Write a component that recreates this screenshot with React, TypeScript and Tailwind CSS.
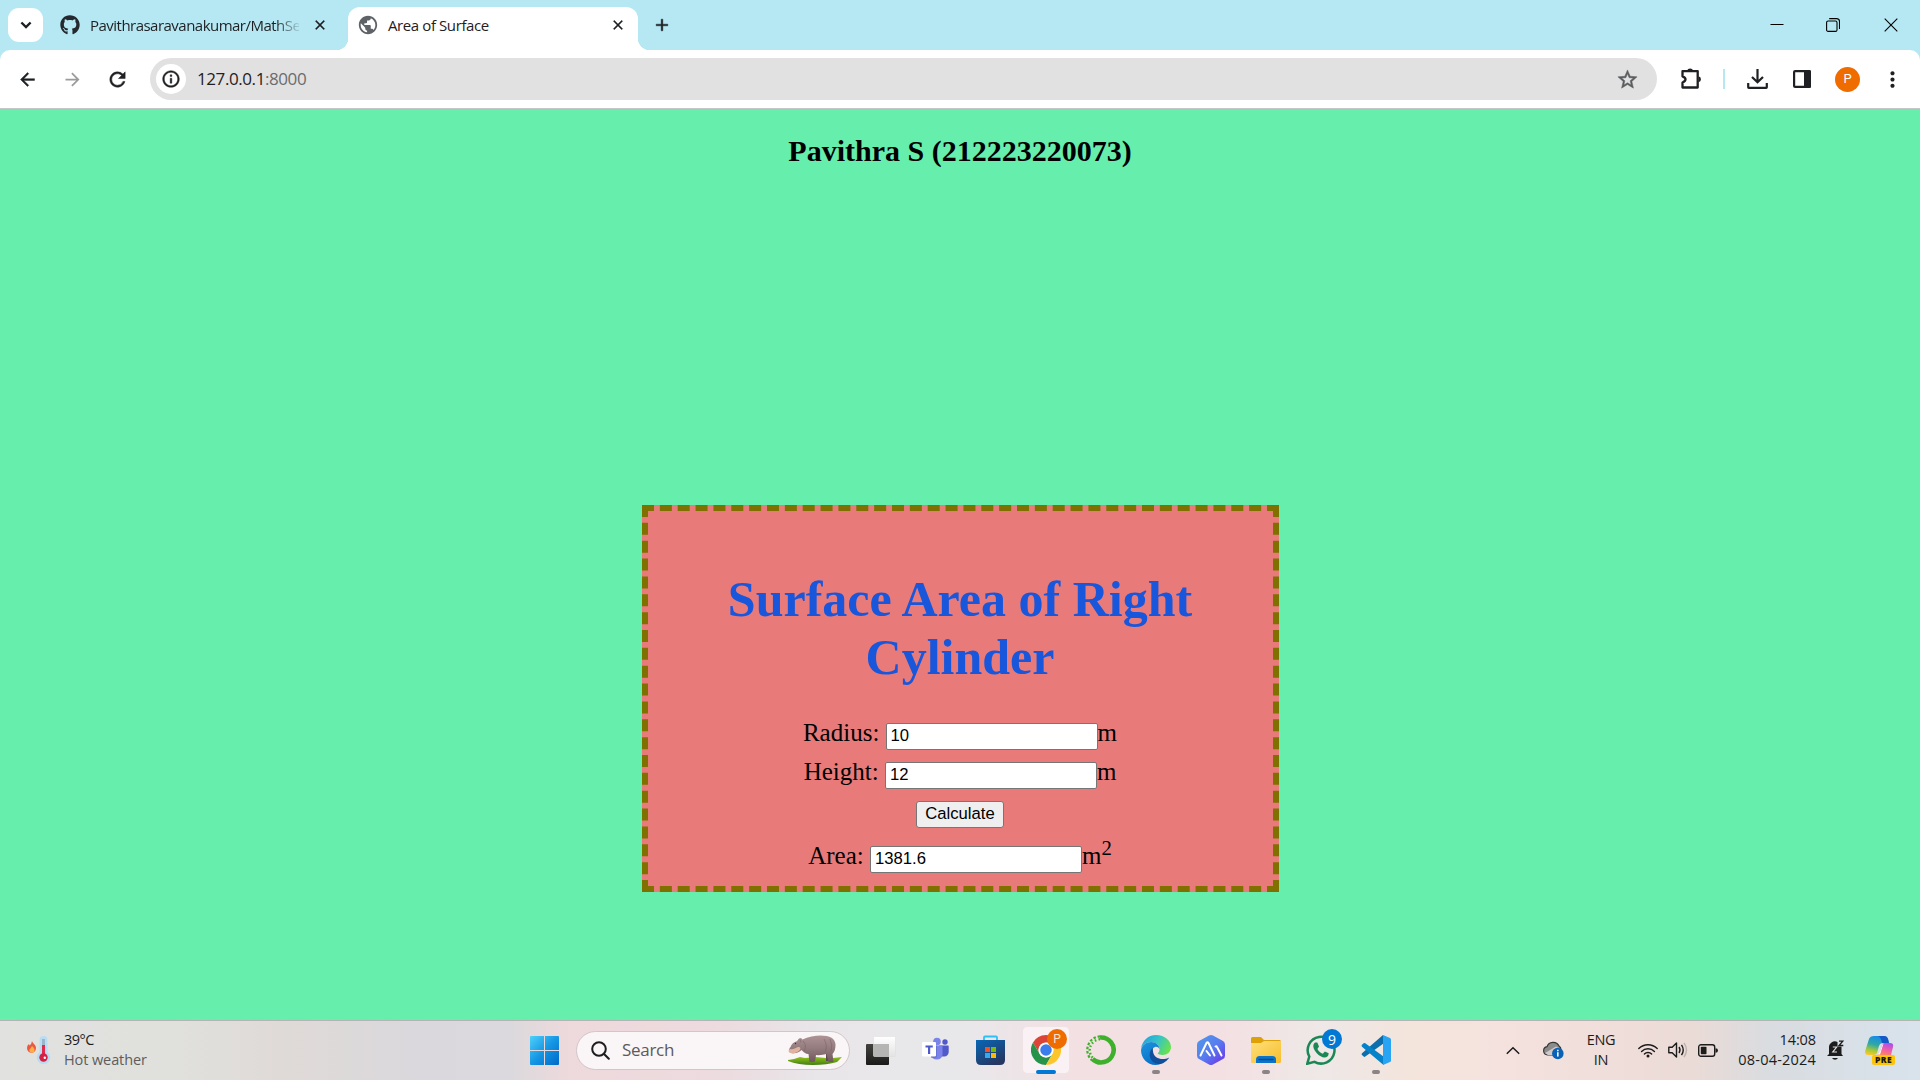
import React, { type ReactNode } from "react";
import { MdArrowBack, MdArrowForward, MdRefresh, MdOutlineInfo, MdStarBorder, MdClose, MdAdd, MdPublic, MdMoreVert } from "react-icons/md";
import { FaGithub } from "react-icons/fa";

const UI = "font-['Open_Sans','Noto_Sans',sans-serif]";
const SERIF = "font-['Liberation_Serif','Times_New_Roman',serif]";
const SANS = "font-['Liberation_Sans',Arial,sans-serif]";
/* Thickens a Material glyph without outlining its transparent bounding path. */
const BOLD = "stroke-current stroke-[0.5] [&_path[fill=none]]:stroke-none";

function TabStrip() {
  return (
    <div className="flex h-[50px] bg-[#b5e8f3] text-[#1f2023]">
      <button className="mt-2 ml-2 flex h-[34px] w-[35px] items-center justify-center rounded-[11px] bg-white">
        <svg viewBox="0 0 12 8" className="h-2 w-3" fill="none" stroke="currentColor" strokeWidth="2.4">
          <path d="M1.4 1.5 6 6l4.600-4.500" />
        </svg>
      </button>
      <div className="ml-[17px] flex w-[288px] items-center">
        <FaGithub className="h-5 w-5 shrink-0 text-[#24292f]" />
        <div className="ml-[10px] w-[209px] text-[15px] tracking-[-0.520px] whitespace-nowrap [mask-image:linear-gradient(to_right,black_185px,transparent_212px)]">
          Pavithrasaravanakumar/MathSe
        </div>
        <MdClose className={`ml-[13px] h-[16px] w-[16px] shrink-0 ${BOLD}`} />
      </div>
      <div className="relative mt-[7px] flex h-[43px] w-[290px] items-center rounded-t-[12px] bg-white pb-[7px] before:absolute before:bottom-0 before:-left-3 before:h-3 before:w-3 before:bg-[radial-gradient(circle_at_0_0,#b5e8f3_12px,white_12.500px)] after:absolute after:-right-3 after:bottom-0 after:h-3 after:w-3 after:bg-[radial-gradient(circle_at_100%_0,#b5e8f3_12px,white_12.500px)]">
        <MdPublic className="ml-[9px] h-[22px] w-[22px] text-[#5f6368]" />
        <span className="ml-[9px] text-[15px] tracking-[-0.4px]">Area of Surface</span>
        <MdClose className={`mr-[12px] ml-auto h-[16px] w-[16px] ${BOLD}`} />
      </div>
      <MdAdd className={`mt-[15px] ml-[14px] h-5 w-5 ${BOLD}`} />
      <div className="ml-auto flex h-[49px] items-center text-black">
        <svg className="h-[14px] w-[14px]" viewBox="0 0 14 14" stroke="currentColor">
          <path d="M0.500 6.500h13" />
        </svg>
        <svg className="ml-[42px] h-[14px] w-[14px]" viewBox="0 0 14 14" fill="none" stroke="currentColor" strokeWidth="1.100">
          <rect x="0.600" y="3" width="10.400" height="10.400" rx="1.500" />
          <path d="M3.200.6h7.300a3 3 0 0 1 3 3v7.300" />
        </svg>
        <svg className="mr-[22px] ml-[44px] h-[14px] w-[14px]" viewBox="0 0 14 14" stroke="currentColor" strokeWidth="1.100">
          <path d="m.7.7 12.600 12.600M13.300.7.7 13.300" />
        </svg>
      </div>
    </div>
  );
}

function Toolbar() {
  return (
    <div className="bg-[#b5e8f3]">
      <div className="flex h-[59px] items-center rounded-t-[10px] border-b border-[#c5c5c5] bg-white text-[#1f2023]">
        <MdArrowBack className={`ml-[17px] h-[21px] w-[21px] ${BOLD}`} />
        <MdArrowForward className="ml-[24px] h-[21px] w-[21px] text-[#9b9b9b]" />
        <MdRefresh className={`ml-[23px] h-[23px] w-[23px] ${BOLD}`} />
        <div className="ml-[21px] flex h-[42px] w-[1507px] items-center rounded-full bg-[#e1e1e1]">
          <span className="ml-[6px] flex h-[30px] w-[30px] items-center justify-center rounded-full bg-white">
            <MdOutlineInfo className={`h-5 w-5 ${BOLD}`} />
          </span>
          <span className="ml-[11px] text-[17px] tracking-[-0.420px] text-[#1f2023]">
            127.0.0.1<span className="text-[#6a6c6e]">:8000</span>
          </span>
          <MdStarBorder className={`mr-[18px] ml-auto h-[23px] w-[23px] text-[#5b5c5e] ${BOLD}`} />
        </div>
        <svg className="ml-[23px] h-[22px] w-[23px]" viewBox="0 0 23 22" fill="none" stroke="currentColor" strokeWidth="2.300" strokeLinejoin="round">
          <path d="M2.500 3.200h15.200v16.300H2.500v-5c4-1.600 4-4.700 0-6.200z" />
          <path d="M7 3a3.200 3.200 0 0 1 6.200 0zM18.500 8.300a3 3 0 0 1 0 5.900z" fill="currentColor" stroke="none" />
        </svg>
        <span className="ml-[20px] h-5 w-[2px] bg-[#b5e8f3]" />
        <svg className="ml-[22px] h-5 w-[21px]" viewBox="0 0 21 20" fill="none" stroke="currentColor" strokeWidth="2.200">
          <path d="M10.500 0v13M5 8l5.500 5.300L16 8M1.200 14v4.300q0 .6.6.6h17.400q.6 0 .6-.6V14" />
        </svg>
        <svg className="ml-[25px] h-[18px] w-[18px]" viewBox="0 0 18 18">
          <rect x="1.100" y="1.100" width="15.800" height="15.800" rx="1" fill="none" stroke="currentColor" strokeWidth="2.200" />
          <path d="M11 0h5.500Q18 0 18 1.500v15q0 1.500-1.500 1.500H11z" fill="currentColor" />
        </svg>
        <span className="ml-[24px] flex h-[25px] w-[25px] items-center justify-center rounded-full bg-[#ef6c00] font-[Roboto,sans-serif] text-[13px] text-white">P</span>
        <MdMoreVert className="ml-[20px] h-[25px] w-[25px]" />
      </div>
    </div>
  );
}

function Field({ value }: { value: string }) {
  return (
    <input
      readOnly
      defaultValue={value}
      className={`h-[27px] w-[212px] rounded-[2px] border border-[#767676] bg-white px-1 py-0 align-baseline text-[16.667px] leading-[21px] text-black outline-none ${SANS}`}
    />
  );
}

function PageBody() {
  return (
    <main className={`h-[911px] overflow-hidden bg-[#66eead] text-black ${SERIF}`}>
      <h2 className="mt-[25px] text-center text-[30px] leading-[34px] font-bold">Pavithra S (212223220073)</h2>
      <section className="mt-[337px] ml-[642px] h-[387px] w-[637px] border-6 border-dashed border-[#807000] bg-[#e97a7a] pr-[1px] text-center text-[25px]">
        <h1 className="mx-auto mt-[59px] w-[500px] text-[50px] leading-[58px] font-bold text-[#1857dc]">Surface Area of Right Cylinder</h1>
        <div className="mt-[27px] h-[39px] leading-[39px]">Radius: <Field value="10" />m</div>
        <div className="h-[39px] leading-[39px]">Height: <Field value="12" />m</div>
        <div className="mt-1 flex h-[39px] items-center justify-center">
          <button className={`h-[27px] w-[88px] rounded-[3px] border border-[#767676] bg-[#efefef] pb-[2px] text-[16.667px] leading-[20px] ${SANS}`}>Calculate</button>
        </div>
        <div className="mt-[2px] h-[39px] leading-[39px]">
          Area: <Field value="1381.6" />m<sup className="-top-[9px] text-[20.800px] leading-none">2</sup>
        </div>
      </section>
    </main>
  );
}

function Slot({ children, running }: { children: ReactNode; running?: boolean }) {
  return (
    <div className="relative flex h-[48px] w-[55px] items-center justify-center">
      {children}
      {running && <span className="absolute bottom-0 left-[24px] h-1 w-2 rounded-full bg-[#8a8486]" />}
    </div>
  );
}

const Windows = () => (
  <svg className="h-[29px] w-[29px]" viewBox="0 0 29 29">
    <defs>
      <linearGradient id="win" x1="0" y1="0" x2="1" y2="1"><stop stopColor="#4fd0fb" /><stop offset=".5" stopColor="#1596e4" /><stop offset="1" stopColor="#0069c8" /></linearGradient>
    </defs>
    <path fill="url(#win)" d="M1 0h13v14H0V1q0-1 1-1zM15 0h13q1 0 1 1v13H15zM0 15h14v14H1q-1 0-1-1zM15 15h14v13q0 1-1 1H15z" />
  </svg>
);

const Hippo = () => (
  <svg className="h-[30px] w-[56px]" viewBox="0 0 56 30">
    <defs>
      <linearGradient id="hip" x1="0" y1="0" x2="0" y2="1"><stop stopColor="#ad9394" /><stop offset=".5" stopColor="#937a7d" /><stop offset="1" stopColor="#70585d" /></linearGradient>
      <linearGradient id="grass" x1="0" y1="0" x2="0" y2="1"><stop stopColor="#9ccb1c" /><stop offset="1" stopColor="#437d13" /></linearGradient>
    </defs>
    <path fill="url(#grass)" d="m1 25 6-1 6-2 5 1 11-1 10 1 4-2 3 2 9-1-5 5q-10 3-24 3-15 0-25-4z" />
    <path fill="#5f484d" d="M24 18h5l-1 8h-4zM39 17h5l-1 9h-4z" />
    <path fill="url(#hip)" d="M10 6 12 3.500l2-.500 1.500 1.500q4-2 9-3 8-1.500 15-.5c6 .7 9 5 9 9s-1 7-3 9l1 8h-5l-2-8q-5 1.500-11 1l-1 7h-5l-1-8c-3 0-5-2-7-4-2 2-6 4-10 3-3-1-3-4-1-6 1-3 3-5 7-6z" />
    <path fill="#e0b3a0" d="M3 14c3 1 5-1 8-2 3 0 3 2 1 4-3 2-6 3-9 2-2-1-2-3 0-4z" />
    <circle cx="8.500" cy="8.500" r=".7" fill="#402e30" />
    <path d="m13 4.500 1 3M16 6c3 3 3 7 1 10M37 4q4 7 1 13M43 4q3 6 1 12" fill="none" stroke="#755d60" strokeWidth=".5" />
  </svg>
);

const TaskView = () => (
  <svg className="h-[29px] w-[30px]" viewBox="0 0 30 29">
    <defs>
      <linearGradient id="tv" x1="0" y1="0" x2="0" y2="1"><stop stopColor="#42423f" /><stop offset="1" stopColor="#1b1b19" /></linearGradient>
      <linearGradient id="tw" x1="0" y1="0" x2="0" y2="1"><stop stopColor="#fff" /><stop offset="1" stopColor="#e3e3e3" /></linearGradient>
    </defs>
    <rect y="8" width="23" height="21" rx="1" fill="url(#tv)" />
    <rect x="7.500" y=".5" width="22" height="20" rx="1" fill="url(#tw)" stroke="#ddd" strokeWidth=".5" />
    <path d="M7.500 8H23v12.500H8.500q-1 0-1-1z" fill="#b5b5b3" />
  </svg>
);

const Teams = () => (
  <svg className="h-[26px] w-[27px]" viewBox="0 0 27 26">
    <circle cx="15" cy="4.500" r="3.800" fill="#7b83eb" /><circle cx="23" cy="5" r="2.700" fill="#5059c9" />
    <path d="M17 8.500h9q.7 0 .7.700v6a5 5 0 0 1-9.700 1z" fill="#5059c9" />
    <path d="M9 8.500h11.500v9a5.800 5.800 0 0 1-11.500 0z" fill="#7b83eb" />
    <path d="M9 8.500h5.500v12H9z" fill="#5562b8" />
    <rect y="5" width="14" height="14.500" rx="1" fill="#fff" />
    <path d="M3.500 8.500h7.300v2H8.200v6.500H6v-6.500H3.500z" fill="#5059c9" />
  </svg>
);

const Store = () => (
  <svg className="h-[30px] w-[29px]" viewBox="0 0 29 30">
    <defs><linearGradient id="store" x1="0" y1="0" x2=".6" y2="1"><stop stopColor="#0867b7" /><stop offset="1" stopColor="#253762" /></linearGradient></defs>
    <path d="M8 7V2.500q0-1 1-1h11q1 0 1 1V7" fill="none" stroke="#2cc0f5" strokeWidth="1.800" />
    <path d="M0 5h29v20q0 5-5 5H5q-5 0-5-5z" fill="url(#store)" />
    <path fill="#f25022" d="M9 12h5v5H9z" /><path fill="#7fba00" d="M15 12h5v5h-5z" />
    <path fill="#36a9ee" d="M9 18h5v5H9z" /><path fill="#ffb900" d="M15 18h5v5h-5z" />
  </svg>
);

const Chrome = () => (
  <svg className="h-[30px] w-[30px]" viewBox="0 0 48 48">
    <path fill="#db4437" d="M24 0a24 24 0 0 1 20.800 12H24a12 12 0 0 0-10.400 18L3.200 12A24 24 0 0 1 24 0z" />
    <path fill="#26934a" d="M3.200 12a24 24 0 0 0 20.800 36l10.400-18a12 12 0 0 1-20.800 0z" />
    <path fill="#fcc62b" d="M44.800 12a24 24 0 0 1-20.800 36l10.400-18A12 12 0 0 0 24 12z" />
    <circle cx="24" cy="24" r="11.800" fill="#fff" /><circle cx="24" cy="24" r="9.200" fill="#3b7ded" />
  </svg>
);

const Anaconda = () => (
  <svg className="h-[30px] w-[30px]" viewBox="0 0 30 30" fill="none">
    <path d="M14 2.500A12.500 12.500 0 1 1 6.500 24" stroke="#3eb02c" strokeWidth="4.600" />
    <path d="M14 1.300A13.700 13.700 0 0 0 6 25.300" stroke="#3eb02c" strokeWidth="2.200" strokeDasharray="2.500 1.800" />
    <path d="M14 4.200A11 11 0 0 0 7 23" stroke="#3eb02c" strokeWidth="2.400" strokeDasharray="1.600 2.200" />
  </svg>
);

const Edge = () => (
  <svg className="h-[30px] w-[30px]" viewBox="0 0 30 30">
    <defs>
      <linearGradient id="e1" x1="0" y1=".2" x2="1" y2=".6"><stop stopColor="#229fdf" /><stop offset=".5" stopColor="#36c3c8" /><stop offset="1" stopColor="#6be24b" /></linearGradient>
      <linearGradient id="e2" x1="0" y1="0" x2=".5" y2="1"><stop stopColor="#1c96dc" /><stop offset="1" stopColor="#0a6fcb" /></linearGradient>
    </defs>
    <path fill="url(#e1)" d="M0 14C1 6 7 0 15 0c9 0 15 6 15 12 0 5-4 8-8 8-3 0-6-1-5-2 1-1 1.500-2 1.500-4 0-4-4-7-8.500-7C5 7 1.500 10 0 14z" />
    <path fill="url(#e2)" d="M0 15c1-5 5-8 10-8 5 0 8.500 3.500 8.500 7-1-2-3-2.500-4.500-2-3 1-4 4-4 7 0 6 4 10 9 10-1.500.7-3 1-4.500 1C6 30 0 23 0 15z" />
    <path fill="#104f9c" d="M12 12.700c-6 5-3.500 15.500 6 16.500 5-.5 8-3.500 10.300-6.700-7 3.500-15.300 1-16.200-5.500-.3-1.600-.400-3 -.1-4.300z" />
  </svg>
);

const HexM = () => (
  <svg className="h-[30px] w-[28px]" viewBox="0 0 28 30">
    <defs><linearGradient id="hex" x1="0" y1="0" x2="1" y2="1"><stop stopColor="#539be8" /><stop offset=".5" stopColor="#577cf0" /><stop offset="1" stopColor="#702ee5" /></linearGradient></defs>
    <path d="M12 .6q2-1 4 0l10 5.400q2 1 2 3.500v11q0 2.500-2 3.500l-10 5.400q-2 1-4 0L2 24q-2-1-2-3.500v-11Q0 7 2 6z" fill="url(#hex)" />
    <path d="m3.500 20.500 6-12.500q1-1.500 2 0l6 12.500M9.500 16l3.500 4.500M18.500 11.500q1-.700 1.500.500L24.500 20.500" fill="none" stroke="#fff" strokeWidth="2" strokeLinecap="round" strokeLinejoin="round" />
  </svg>
);

const Folder = () => (
  <svg className="h-[27px] w-[30px]" viewBox="0 0 30 27">
    <defs><linearGradient id="fold" x1="0" y1="0" x2="1" y2="1"><stop stopColor="#ffe07a" /><stop offset="1" stopColor="#f7bd2c" /></linearGradient></defs>
    <path d="M0 1.500Q0 0 1.500 0H10l3 3h15.500Q30 3 30 4.500V9H0z" fill="#dda008" />
    <path d="M0 6h10l3-2h17v20.500q0 1.500-1.500 1.500h-27Q0 26 0 24.500z" fill="url(#fold)" />
    <path d="M5 26v-3.500Q5 19 8.500 19h13q3.500 0 3.500 3.500V26z" fill="#0a74cb" />
    <path d="M8 22.500h14" stroke="#08498b" strokeWidth="1.500" strokeLinecap="round" />
  </svg>
);

const WhatsApp = () => (
  <svg className="h-[30px] w-[30px]" viewBox="0 0 30 30" fill="none">
    <path d="M1.300 28.700 3.300 21.500A13.400 13.400 0 1 1 8.500 26.800z" stroke="#1b8755" strokeWidth="2.500" />
    <path d="M9 7.600h2.300l1.700 4-1.600 2.300c1.500 2.600 3 3.900 5.400 4.900l2.100-2.400 3.800 1.900c0 3-2 4.300-4.200 4.300C13.500 22 8 16.500 7.300 11.500c0-1.700.7-3.200 1.700-3.900z" fill="#1b8755" />
  </svg>
);

const VsCode = () => (
  <svg className="h-[30px] w-[30px]" viewBox="0 0 30 30">
    <path d="M22 0 1 18.200q-1 1 0 1.900l1.600 1.500q.8.600 1.700 0L22.500 8.500z" fill="#0b6ead" />
    <path d="m1 9.800 1.600-1.500q.8-.6 1.700 0L22.500 21.500V30L1 11.700q-1-1 0-1.900z" fill="#0582ca" />
    <path d="M22 0 29 3q1 .5 1 1.600v20.800q0 1.100-1 1.600l-7 3z" fill="#29a4f2" />
  </svg>
);

const Copilot = () => (
  <svg className="h-[29px] w-[30px]" viewBox="0 0 30 29">
    <defs>
      <linearGradient id="cp1" x1=".5" y1="0" x2=".2" y2="1"><stop stopColor="#178be8" /><stop offset=".45" stopColor="#30a8a4" /><stop offset=".75" stopColor="#a3c83c" /><stop offset="1" stopColor="#ffc928" /></linearGradient>
      <linearGradient id="cp2" x1=".7" y1="0" x2=".3" y2="1"><stop stopColor="#a951e8" /><stop offset=".5" stopColor="#ef5cae" /><stop offset="1" stopColor="#ff8b52" /></linearGradient>
    </defs>
    <path d="M9 0h10q3 0 4 3l1 4h-6q-3 0-4 3l-2 7q-1 2-3 2H3q-4 0-2.500-5L4 3q1-3 5-3z" fill="url(#cp1)" />
    <path d="M13 0h6q3 0 4 3l1 4h-7q-1-6-4-7z" fill="#1559c8" />
    <path d="M19 7h6q4 0 3 4l-2 8H11q3 0 4-3l2-7q.5-2 2-2z" fill="url(#cp2)" />
    <path d="M18.500 7.500 15 18.500h-3q2 0 3-3l2-6q.5-1.500 1.500-2z" fill="#fff" />
    <rect x="7" y="19" width="23" height="10" rx="2" fill="#fcc50b" />
    <text x="18.500" y="27" textAnchor="middle" fontSize="8.500" fontWeight="800" fontFamily="Open Sans" letterSpacing=".4" fill="#17180f">PRE</text>
  </svg>
);

function Taskbar() {
  return (
    <footer className={`h-[60px] border-t border-[#b5b3b3] bg-[linear-gradient(90deg,#e1e2df_0px,#e0e0dd_180px,#dfdad7_280px,#dad8dd_430px,#dbd9dd_510px,#eed9dc_570px,#ecdbdf_720px,#e8e6e9_820px,#e8e8eb_960px,#f3e0e3_1080px,#f4e0e3_1220px,#eee8e7_1320px,#f4e4db_1420px,#f5e2df_1500px,#ebdbd6_1690px,#d9dce0_1770px,#d8e3ec_1920px)] text-[#1c1c1c] ${UI}`}>
      <div className="flex h-[58px] items-center">
        <svg className="ml-[27px] h-[29px] w-[24px]" viewBox="0 0 24 29">
          <path d="M5 5c.8 2.500 4 3.500 4 7 0 3-2 4.700-4.500 4.700S0 15 0 12c0-2 1-3.200 2-4l.6 1.500C4 8.500 4.500 7 5 5z" fill="#ec5740" />
          <path d="M5 10c2 2 3 3 2.400 5-.8 2-4.200 2-5 0C2 13 4 12.500 5 10z" fill="#ffb044" />
          <path d="M12.500 4a4 4 0 0 1 8 0v12a6.700 6.700 0 1 1-8 0z" fill="#b9dcf5" />
          <path d="M15 3h3v16h-3z" fill="#9bb5c9" /><path d="M15 9h3v10h-3z" fill="#e02a4c" /><circle cx="16.500" cy="21.500" r="4.200" fill="#d51f45" /><circle cx="17.800" cy="21.700" r="1.200" fill="#fff" />
        </svg>
        <div className="ml-[13px] w-[120px] text-[14.500px] leading-5">
          <div className="tracking-[-0.500px]">39°C</div>
          <div className="tracking-[-0.100px] whitespace-nowrap text-[#5d5d5c]">Hot weather</div>
        </div>
        <div className="ml-[346px]"><Windows /></div>
        <div className="ml-[17px] flex h-[39px] w-[274px] items-center rounded-full border border-[#d3c6c8] bg-[#faf5f6]">
          <svg className="ml-[14px] h-[19px] w-[19px]" viewBox="0 0 19 19" fill="none" stroke="#1d1d1d" strokeWidth="2"><circle cx="8" cy="8" r="6.800" /><path d="m12.800 12.800 5 5" strokeLinecap="round" /></svg>
          <span className="ml-[12px] text-[17px] tracking-[-0.300px] text-[#5c5b5b]">Search</span>
          <div className="mr-[6px] ml-auto"><Hippo /></div>
        </div>
        <div className="ml-[3px] flex">
          <Slot><TaskView /></Slot>
          <Slot><Teams /></Slot>
          <Slot><Store /></Slot>
          <Slot>
            <div className="flex h-12 w-12 items-center justify-center rounded-[5px] border border-[#efe3e6] bg-[#f9f1f3]"><Chrome /></div>
            <span className="absolute top-[3px] left-[29px] flex h-5 w-5 items-center justify-center rounded-full bg-[#ef6c00] font-[Roboto,sans-serif] text-[12px] text-[#fbe5d2]">P</span>
            <span className="absolute bottom-0 left-[18px] h-1 w-5 rounded-full bg-[#0078d4]" />
          </Slot>
          <Slot><Anaconda /></Slot>
          <Slot running><Edge /></Slot>
          <Slot><HexM /></Slot>
          <Slot running><Folder /></Slot>
          <Slot>
            <WhatsApp />
            <span className="absolute top-[3px] left-[29px] flex h-5 w-5 items-center justify-center rounded-full bg-[#0078d4] text-[14px] text-white">9</span>
          </Slot>
          <Slot running><VsCode /></Slot>
        </div>
        <svg className="ml-[103px] h-[9px] w-[14px]" viewBox="0 0 14 9" fill="none" stroke="currentColor" strokeWidth="1.500"><path d="m.8 7.700 6.200-6 6.200 6" /></svg>
        <svg className="ml-[23px] h-[19px] w-[21px]" viewBox="0 0 21 19">
          <path d="M4.500 14A4.200 4.200 0 0 1 4 5.700 6.500 6.500 0 0 1 16 5a4.500 4.500 0 0 1 2 4l-4 5z" fill="#8b8b8b" stroke="#373737" strokeWidth="1.200" />
          <path d="M2 12 13 5.500l4 2V14H5z" fill="#cfc9c8" />
          <circle cx="14.800" cy="12.500" r="5.800" fill="#0862b8" /><path d="M14 11.300h1.600v4.200H14zM14 8.800h1.600v1.500H14z" fill="#fff" />
        </svg>
        <div className="ml-[19px] w-[36px] text-center text-[14.500px] leading-5 tracking-[-0.300px]"><div>ENG</div><div>IN</div></div>
        <svg className="ml-[19px] h-[15px] w-[20px]" viewBox="0 0 20 15" fill="none" stroke="currentColor" strokeWidth="1.400" strokeLinecap="round">
          <path d="M.8 5.500a13 13 0 0 1 18.400 0M3.600 8.400a9 9 0 0 1 12.800 0M6.400 11a5 5 0 0 1 7.200 0" /><circle cx="10" cy="13.100" r="1.500" fill="currentColor" stroke="none" />
        </svg>
        <svg className="ml-[10px] h-[16px] w-[20px]" viewBox="0 0 20 16" fill="none" stroke="currentColor" strokeWidth="1.400" strokeLinejoin="round">
          <path d="M.8 5.200h3.400L8.500 1v14L4.200 10.800H.8zM11 5q2 3 0 6M13.500 2.800q3.500 5.200 0 10.400" /><path d="M16 .8q5 7.200 0 14.400" stroke="#bdb2ae" />
        </svg>
        <svg className="ml-[10px] h-[13px] w-[20px]" viewBox="0 0 20 13">
          <rect x=".7" y=".7" width="16" height="11.600" rx="2.300" fill="none" stroke="currentColor" strokeWidth="1.400" /><rect x="2.800" y="2.800" width="5.700" height="7.400" rx=".8" fill="currentColor" /><path d="M17.500 4.300q2.500 0 2.500 2.200t-2.500 2.200z" fill="currentColor" />
        </svg>
        <div className="ml-[10px] w-[88px] text-right text-[14.500px] leading-5 tracking-[0.200px] whitespace-nowrap"><div className="tracking-[-0.100px]">14:08</div><div>08-04-2024</div></div>
        <svg className="ml-[11px] h-[20px] w-[17px]" viewBox="0 0 17 20">
          <path d="M2 14V7a5.800 5.800 0 0 1 8.500-5v4.500h4V14l1.500 2H0z" fill="currentColor" /><path d="M5 18h6q-1 1.800-3 1.800T5 18z" fill="currentColor" />
          <path d="M5.800 7H9.700l-3.900 5h4.200" fill="none" stroke="#dde0e4" strokeWidth="1.200" /><path d="M12 1.200h3.700l-3.700 4.300h4.300" fill="none" stroke="currentColor" strokeWidth="1.300" />
        </svg>
        <div className="ml-[21px]"><Copilot /></div>
      </div>
    </footer>
  );
}

export default function App() {
  return (
    <div className={`flex h-[1080px] w-[1920px] flex-col overflow-hidden ${UI}`}>
      <TabStrip />
      <Toolbar />
      <PageBody />
      <Taskbar />
    </div>
  );
}
